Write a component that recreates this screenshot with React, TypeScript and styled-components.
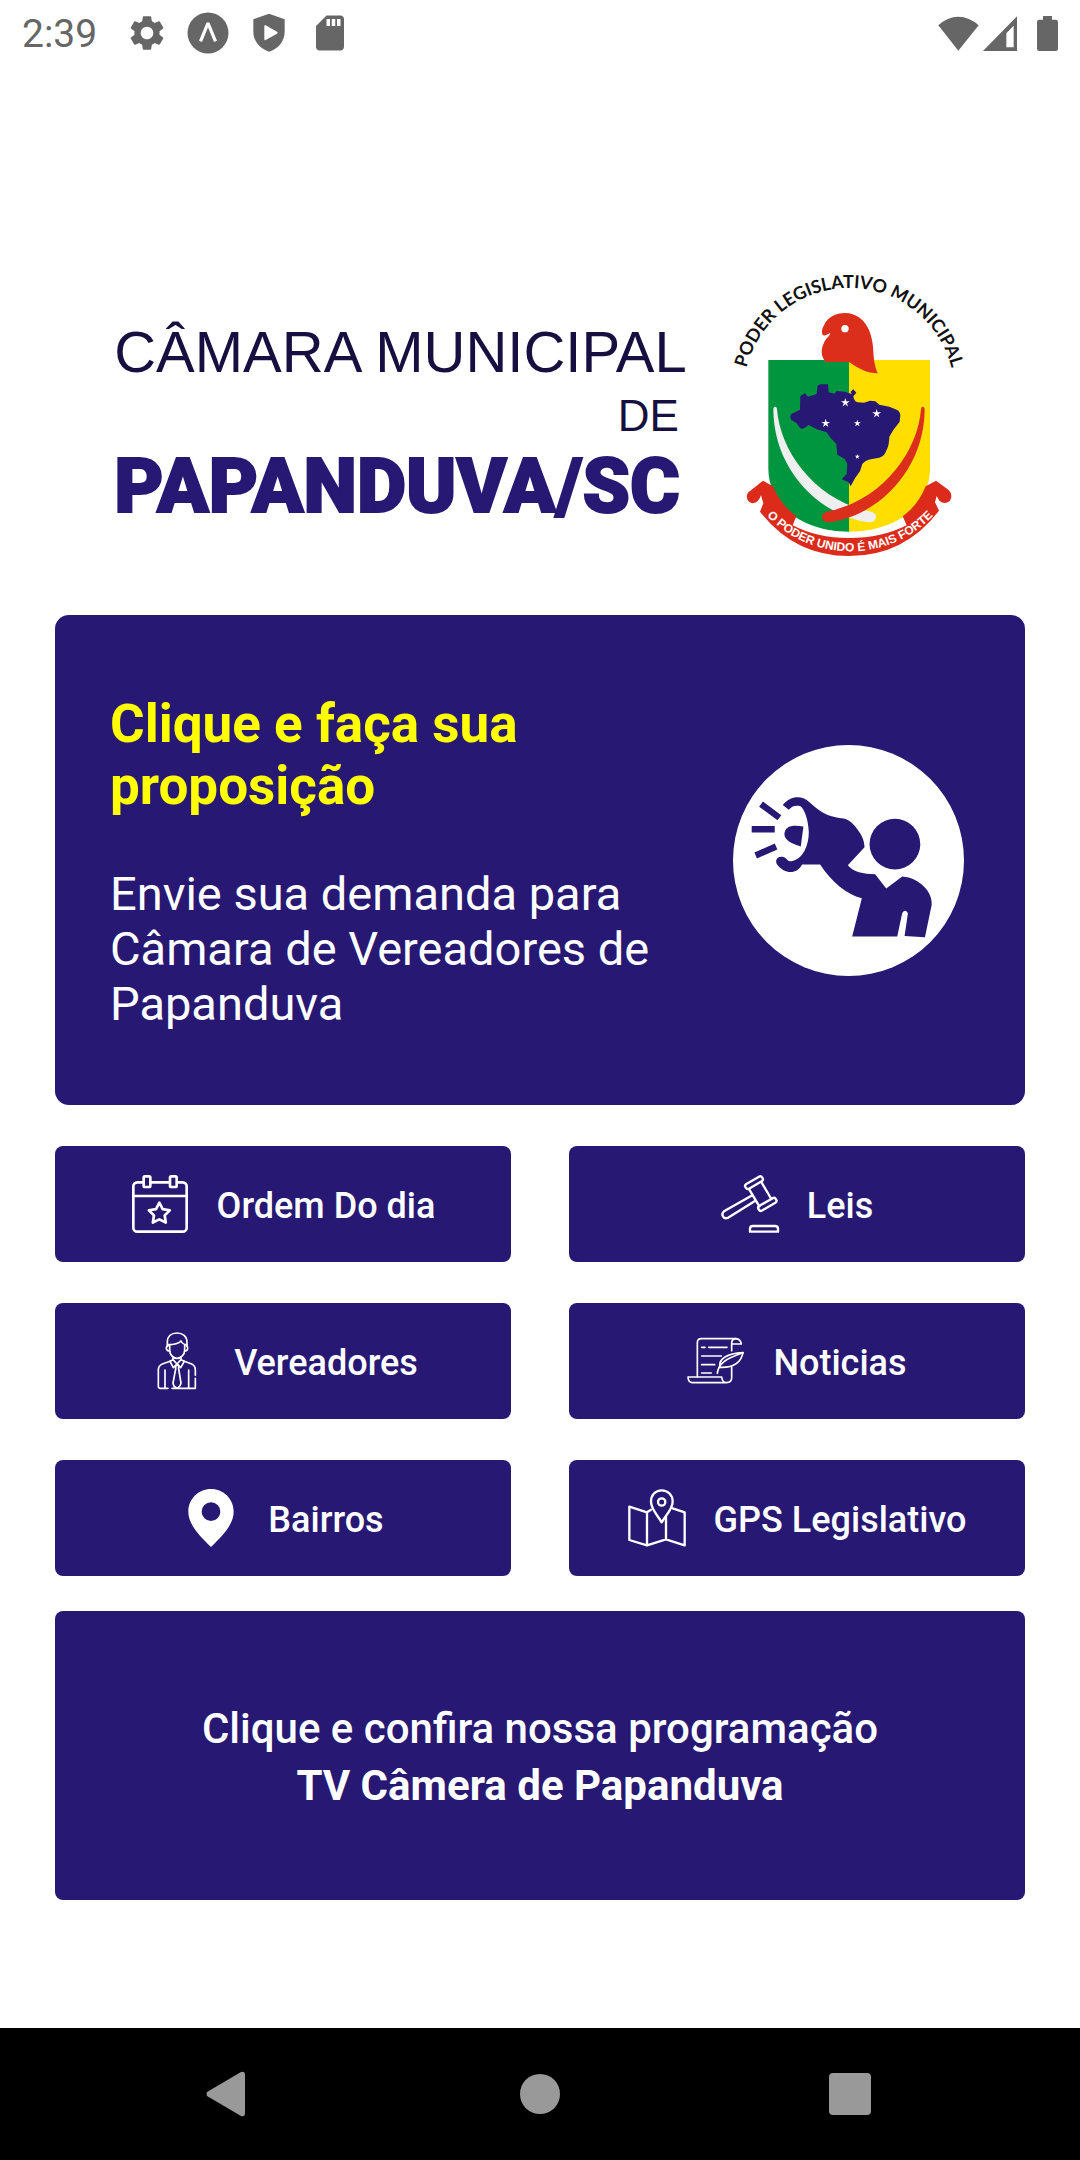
import React from "react";
import styled, { createGlobalStyle } from "styled-components";
import { MdSettings, MdSdCard } from "react-icons/md";

const navy = "#271873";
const grey = "#666666";
const sans = `Roboto, "Noto Sans", sans-serif`;
const arial = `"Liberation Sans", Arial, sans-serif`;

const GlobalStyle = createGlobalStyle`
  *, *::before, *::after { box-sizing: border-box; }
  body { margin: 0; background: #ffffff; font-family: ${sans}; }
  h1, h2, p { margin: 0; }
  button { border: 0; padding: 0; font-family: inherit; cursor: pointer; }
  svg { display: block; flex: none; overflow: visible; }
`;

const Screen = styled.div`
  display: flex;
  flex-direction: column;
  min-height: 100vh;
`;

const StatusBar = styled.header`
  display: flex;
  align-items: center;
  justify-content: space-between;
  height: 66px;
  padding: 0 22px;
  color: ${grey};
`;

const StatusGroup = styled.div<{ $gap: number }>`
  display: flex;
  align-items: center;
  gap: ${(p) => p.$gap}px;
`;

const Clock = styled.time`
  margin-right: 10px;
  padding-top: 2px;
  font-size: 39px;
  line-height: 44px;
`;

const Main = styled.main`
  display: flex;
  flex: 1;
  flex-direction: column;
  padding: 207px 55px 128px;
`;

const Brand = styled.div`
  display: flex;
  justify-content: center;
  gap: 45px;
  margin-bottom: 55px;
`;

const BrandName = styled.h1`
  display: flex;
  flex-direction: column;
  padding-top: 47px;
  color: #170f40;
  font-family: ${arial};
  font-weight: 400;
  white-space: nowrap;
`;

const BrandTop = styled.span`
  font-size: 58px;
  line-height: 64px;
`;

const BrandOf = styled.span`
  padding-right: 8px;
  font-size: 44px;
  line-height: 64px;
  text-align: right;
`;

const BrandCity = styled.span`
  color: ${navy};
  font-family: ${sans};
  font-size: 76px;
  font-weight: 900;
  line-height: 76px;
  -webkit-text-stroke: 2px ${navy};
`;

const Hero = styled.button`
  display: flex;
  align-items: center;
  justify-content: space-between;
  gap: 40px;
  min-height: 490px;
  padding: 55px 61px 55px 55px;
  border-radius: 14px;
  background: ${navy};
  color: #ffffff;
  text-align: left;
`;

const HeroCopy = styled.span`
  display: flex;
  flex-direction: column;
  gap: 49px;
  max-width: 560px;
  padding-top: 4px;
`;

const HeroTitle = styled.span`
  color: #ffff00;
  font-size: 53px;
  font-weight: 700;
  line-height: 62px;
`;

const HeroText = styled.span`
  font-size: 47px;
  line-height: 55px;
`;

const Grid = styled.nav`
  display: grid;
  grid-template-columns: 1fr 1fr;
  gap: 41px 58px;
  margin: 41px 0 35px;
`;

const Tile = styled.button`
  display: flex;
  align-items: center;
  justify-content: center;
  gap: 28px;
  height: 116px;
  border-radius: 8px;
  background: ${navy};
  color: #ffffff;
  font-size: 36px;
  font-weight: 500;
  line-height: 44px;
`;

const TileLabel = styled.span`
  padding-top: 4px;
`;

const TvCard = styled.button`
  display: flex;
  flex-direction: column;
  align-items: center;
  justify-content: center;
  min-height: 289px;
  padding-top: 2px;
  border-radius: 8px;
  background: ${navy};
  color: #ffffff;
  font-size: 42px;
  font-weight: 500;
  line-height: 57px;
`;

const Strong = styled.strong`
  font-weight: 700;
`;

const NavBar = styled.footer`
  display: flex;
  align-items: center;
  justify-content: center;
  gap: 226px;
  height: 132px;
  background: #000000;
`;

const NavButton = styled.button`
  display: flex;
  align-items: center;
  justify-content: center;
  width: 84px;
  height: 84px;
  background: transparent;
`;

function starPoints(cx: number, cy: number, outer: number, inner: number) {
  const pts: string[] = [];
  for (let i = 0; i < 10; i++) {
    const r = i % 2 === 0 ? outer : inner;
    const a = -Math.PI / 2 + (i * Math.PI) / 5;
    pts.push(`${(cx + r * Math.cos(a)).toFixed(1)},${(cy + r * Math.sin(a)).toFixed(1)}`);
  }
  return pts.join(" ");
}

const ExpoIcon = () => (
  <svg width="42" height="42" viewBox="0 0 126 126" aria-hidden="true">
    <circle cx="63" cy="63" r="61.500" fill={grey} />
    <path d="M36 86 58 33Q63 29 68 33L90 86 81 90 63 46 45 90Z" fill="#fff" />
  </svg>
);

const ShieldIcon = () => (
  <svg width="42" height="42" viewBox="0 0 126 126" aria-hidden="true">
    <path d="M63 5 110 22V59C110 88 90 111 63 119 36 111 16 88 16 59V22Z" fill={grey} />
    <path d="M49 43Q49 38 53 40L87 59Q91 62 87 65L53 84Q49 86 49 81Z" fill="#fff" />
  </svg>
);

const WifiIcon = () => (
  <svg width="41" height="35" viewBox="0 0 123 105" aria-hidden="true">
    <path d="M1 28Q28 2 61 2T122 28L61 104Z" fill={grey} />
  </svg>
);

const SignalIcon = () => (
  <svg width="34" height="35" viewBox="0 0 102 105" aria-hidden="true">
    <path d="M102 1V105H0ZM92 29 70 52V94H92Z" fill={grey} fillRule="evenodd" />
  </svg>
);

const BatteryIcon = () => (
  <svg width="21" height="35" viewBox="0 0 63 105" aria-hidden="true">
    <path d="M18 0H45V11H56Q63 11 63 18V98Q63 105 56 105H7Q0 105 0 98V18Q0 11 7 11H18Z" fill={grey} />
  </svg>
);

const saber =
  "M160 446Q161 440 166 440 171 441 171 448C180 570 280 715 440 752Q467 755 469 770 466 787 447 787C300 768 160 630 160 446Z";

const Emblem = () => (
  <svg width="234" height="287" viewBox="36 39 702 861" role="img" aria-label="Brasão do Poder Legislativo Municipal">
    <defs>
      <path id="motto-top" d="M70 401A317 317 0 0 1 704 401" />
      <path id="motto-bottom" d="M45 529A345 345 0 0 0 735 529" />
    </defs>
    <text fill="#111" fontFamily={`Lato, ${arial}`} fontWeight="700" fontSize="54" textAnchor="middle">
      <textPath href="#motto-top" startOffset="50%">PODER LEGISLATIVO MUNICIPAL</textPath>
    </text>
    <path d="M145 300H387V815C245 815 145 735 145 625Z" fill="#009640" />
    <path d="M387 300H630V625C630 735 530 815 387 815Z" fill="#ffde00" />
    <path
      d="M308 225Q302 212 312 196C322 172 345 159 377 159C430 161 455 210 459 260 461 300 465 325 474 340 440 340 415 325 387 306H318C302 290 302 268 312 248 318 234 328 230 331 219 322 222 317 229 308 225Z"
      fill="#dc2f1b"
    />
    <circle cx="375" cy="206" r="11" fill="#fff" />
    <path
      d="M292 378 300 373H324L326 397 344 401 350 393 375 395 395 402 392 395 400 388 409 398 400 409Q401 423 412 427L432 428 450 422 466 424 478 434 508 440 530 449Q541 455 541 466L539 485 520 510 508 530Q508 555 498 574 492 590 478 593L452 598Q435 602 427 612L420 634 405 655 392 679 386 667 365 658 380 642 382 612 374 597 352 584 349 552 330 532 320 517 290 508 266 495Q250 509 241 505L230 490 214 480Q208 470 214 462L240 449 241 408 255 400 264 410 290 402Z"
      fill={navy}
    />
    <g fill="#fff">
      <polygon points={starPoints(376, 428, 14, 5)} />
      <polygon points={starPoints(470, 461, 14, 5)} />
      <polygon points={starPoints(317, 490, 14, 5)} />
      <polygon points={starPoints(412, 490, 11, 4)} />
      <polygon points={starPoints(412, 590, 8, 3)} />
    </g>
    <path d={saber} fill="#efefef" />
    <path d={saber} fill="#dc2f1b" transform="matrix(-1 0 0 1 774 0)" />
    <path
      d="M129 662 159 679C174 716 198 746 229 769L218 796Q290 834 387 834 486 834 560 796L548 769C580 746 602 716 617 679L648 662 686 690Q700 705 690 722 674 736 658 722L650 708 645 727 657 752Q553 888 387 888 224 888 120 755L130 730 123 706Q116 728 98 730 78 726 81 705 83 696 90 693Z"
      fill="#dc2a1b"
    />
    <text fill="#fff" fontFamily={arial} fontWeight="700" fontSize="36" textAnchor="middle">
      <textPath href="#motto-bottom" startOffset="50%">O PODER UNIDO É MAIS FORTE</textPath>
    </text>
  </svg>
);

const MegaphoneBadge = () => (
  <svg width="231" height="231" viewBox="40 42 692 692" aria-hidden="true">
    <circle cx="386" cy="388" r="346" fill="#fff" />
    <g fill={navy}>
      <path d="M189 222C212 192 248 192 270 214 310 253 340 258 370 262 385 264 396 274 405 285 425 310 433 325 434 348L384 402C400 422 430 428 466 429L499 472 547 436C600 440 640 485 635 522L615 618 554 614 564 546Q556 532 547 545L532 616H397L426 501C380 490 335 452 301 400H247C232 430 195 430 172 400 162 380 182 370 198 381Q205 391 215 390C248 386 268 345 267 300 265 260 250 221 235 224 222 223 214 228 207 236Z" />
      <path d="M251 286 243 346C213 338 193 325 194 308 196 286 215 280 251 286Z" />
      <circle cx="525" cy="339" r="76" />
    </g>
    <path d="M124 219 179 260M96 294.500H165M108 373 169 346" stroke={navy} strokeWidth="19" />
  </svg>
);

type IconProps = { weight: number; children: React.ReactNode };

const LineIcon = ({ weight, children }: IconProps) => (
  <svg
    width="58"
    height="58"
    viewBox="0 0 174 174"
    fill="none"
    stroke="#fff"
    strokeWidth={weight}
    strokeLinecap="round"
    strokeLinejoin="round"
    aria-hidden="true"
  >
    {children}
  </svg>
);

const CalendarIcon = () => (
  <LineIcon weight={8}>
    <rect x="7" y="22" width="160" height="148" rx="12" />
    <path d="M7 63H167" />
    <rect x="38" y="4" width="20" height="32" rx="4" fill={navy} />
    <rect x="117" y="4" width="20" height="32" rx="4" fill={navy} />
    <polygon points={starPoints(85, 116, 33, 17)} />
  </LineIcon>
);

const GavelIcon = () => (
  <LineIcon weight={7}>
    <rect x="-29" y="-8" width="58" height="16" rx="7" transform="translate(99 23) rotate(-30)" />
    <rect x="-30" y="-8" width="60" height="16" rx="7" transform="translate(139 88) rotate(-30)" />
    <path d="M85 44 115 94M122 23 151 72" />
    <path d="M94 61 9 109C-1 117 6 133 20 129L103 77" />
    <path d="M87 170V161Q87 153 95 153H162Q171 153 171 161V170Z" />
  </LineIcon>
);

const CouncillorIcon = () => (
  <LineIcon weight={5}>
    <path d="M58 42V31C58 13 70 3 87 3S117 13 117 31V42" />
    <path d="M59 38C76 38 92 35 99 27 103 35 109 38 116 38" />
    <path d="M65 39V54C65 68 75 79 87 79S110 68 110 54V39" />
    <path d="M60 41Q54 43 55 50 57 57 65 57M115 41Q120 43 119 50 117 57 110 57" />
    <path d="M75 77V83L66 88 76 107 87 96 98 107 109 88 99 83V77M75 83 87 96 99 83" />
    <path d="M66 88 43 96Q31 101 31 114V163Q31 169 37 169H60M72 169H142V139M142 130V114Q142 101 131 96L109 88" />
    <path d="M51 114V169M122 114V169" />
    <path d="M83 100H92V111L99 153Q96 166 87 168 77 166 75 153L83 111Z" />
  </LineIcon>
);

const ScrollIcon = () => (
  <LineIcon weight={5}>
    <path d="M31 134V32Q31 20 43 20H147" />
    <path d="M134 56V33Q135 20 147 20 160 21 163 36H134" />
    <path d="M3 135H104Q106 152 118 152 134 151 134 138V106M3 135Q4 152 16 152H118" />
    <path d="M44 46H54M65 46H120M44 72H103M44 98H83M44 123H73" />
    <path d="M91 124C92 112 98 99 112 88 125 77 145 70 168 62" />
    <path d="M98 103C97 78 120 65 168 62 162 92 140 108 98 106" />
  </LineIcon>
);

const PinIcon = () => (
  <svg width="58" height="58" viewBox="0 0 174 174" aria-hidden="true">
    <path
      d="M87 0C49 0 19 30 19 68 19 106 52 140 87 174 122 140 155 106 155 68 155 30 125 0 87 0ZM87 40A28 28 0 1 1 87 96 28 28 0 1 1 87 40Z"
      fill="#fff"
      fillRule="evenodd"
    />
  </svg>
);

const MapIcon = () => (
  <LineIcon weight={7}>
    <path d="M69 62 57 70 4 53V153L57 169 114 151 170 169V70L134 58M57 70V169M114 84V151" />
    <path d="M101 4C82 4 69 18 69 38 69 60 88 78 101 100 114 78 134 60 134 38 134 18 120 4 101 4Z" />
    <circle cx="101" cy="39" r="11" />
  </LineIcon>
);

const tiles = [
  { label: "Ordem Do dia", Icon: CalendarIcon },
  { label: "Leis", Icon: GavelIcon },
  { label: "Vereadores", Icon: CouncillorIcon },
  { label: "Noticias", Icon: ScrollIcon },
  { label: "Bairros", Icon: PinIcon },
  { label: "GPS Legislativo", Icon: MapIcon },
];

export default function App() {
  return (
    <Screen>
      <GlobalStyle />
      <StatusBar>
        <StatusGroup $gap={19}>
          <Clock>2:39</Clock>
          <MdSettings size={42} />
          <ExpoIcon />
          <ShieldIcon />
          <MdSdCard size={42} />
        </StatusGroup>
        <StatusGroup $gap={4}>
          <WifiIcon />
          <StatusGroup $gap={20}>
            <SignalIcon />
            <BatteryIcon />
          </StatusGroup>
        </StatusGroup>
      </StatusBar>

      <Main>
        <Brand>
          <BrandName>
            <BrandTop>CÂMARA MUNICIPAL</BrandTop>
            <BrandOf>DE</BrandOf>
            <BrandCity>PAPANDUVA/SC</BrandCity>
          </BrandName>
          <Emblem />
        </Brand>

        <Hero type="button">
          <HeroCopy>
            <HeroTitle>Clique e faça sua proposição</HeroTitle>
            <HeroText>Envie sua demanda para Câmara de Vereadores de Papanduva</HeroText>
          </HeroCopy>
          <MegaphoneBadge />
        </Hero>

        <Grid>
          {tiles.map(({ label, Icon }) => (
            <Tile key={label} type="button">
              <Icon />
              <TileLabel>{label}</TileLabel>
            </Tile>
          ))}
        </Grid>

        <TvCard type="button">
          <span>Clique e confira nossa programação</span>
          <Strong>TV Câmera de Papanduva</Strong>
        </TvCard>
      </Main>

      <NavBar>
        <NavButton type="button" aria-label="Voltar">
          <svg width="48" height="46" viewBox="0 0 48 46">
            <path d="M1 21 35 1Q39 0 39 4V42Q39 46 35 45L1 25Q0 23 1 21Z" fill="#999" />
          </svg>
        </NavButton>
        <NavButton type="button" aria-label="Início">
          <svg width="40" height="40" viewBox="0 0 40 40">
            <circle cx="20" cy="20" r="20" fill="#999" />
          </svg>
        </NavButton>
        <NavButton type="button" aria-label="Recentes">
          <svg width="42" height="42" viewBox="0 0 42 42">
            <rect width="42" height="42" rx="4" fill="#999" />
          </svg>
        </NavButton>
      </NavBar>
    </Screen>
  );
}
